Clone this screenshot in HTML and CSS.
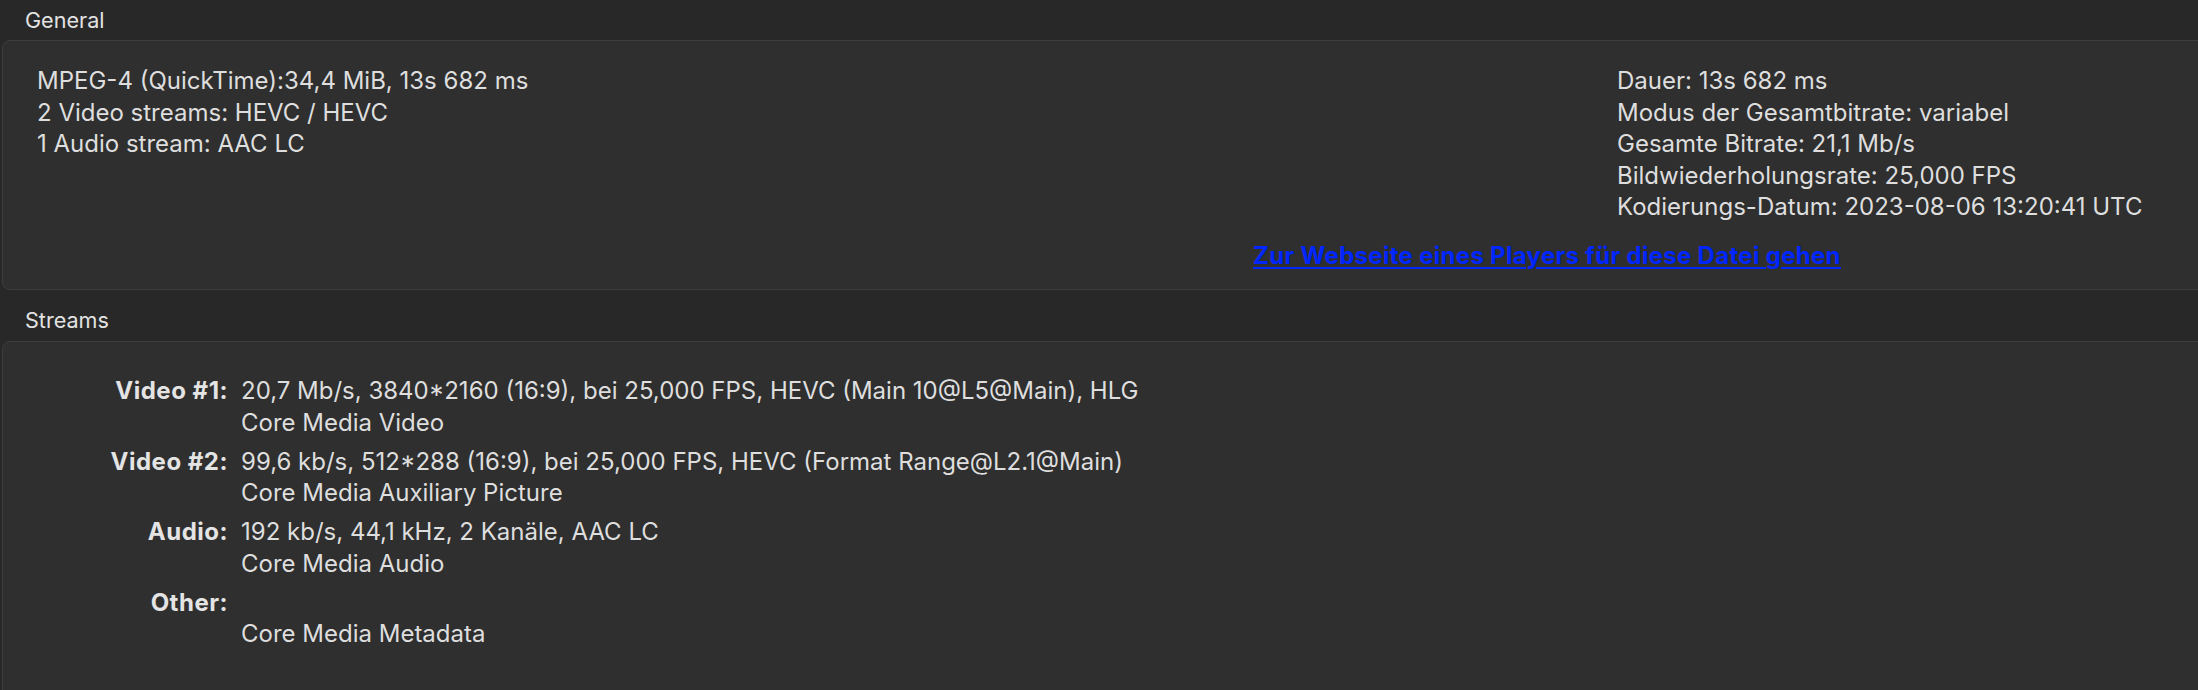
FILE: index.html
```html
<!DOCTYPE html>
<html lang="de">
<head>
<meta charset="utf-8">
<title>MediaInfo</title>
<link rel="stylesheet" href="styles.css">
</head>
<body>
<div class="page">
  <div class="section-title">General</div>
  <div class="box general">
    <div class="general-grid">
      <div class="col">
        <div class="line">MPEG-4 (QuickTime):34,4 MiB, 13s 682 ms</div>
        <div class="line">2 Video streams: HEVC / HEVC</div>
        <div class="line">1 Audio stream: AAC LC</div>
      </div>
      <div class="col">
        <div class="line">Dauer: 13s 682 ms</div>
        <div class="line">Modus der Gesamtbitrate: variabel</div>
        <div class="line">Gesamte Bitrate: 21,1 Mb/s</div>
        <div class="line">Bildwiederholungsrate: 25,000 FPS</div>
        <div class="line">Kodierungs-Datum: 2023-08-06 13:20:41 UTC</div>
      </div>
    </div>
    <div class="link-row"><a class="player-link" href="#">Zur Webseite eines Players für diese Datei gehen</a></div>
  </div>

  <div class="section-title streams-title">Streams</div>
  <div class="box streams">
    <div class="stream-grid">
      <div class="label">Video #1:</div>
      <div class="value"><div class="line">20,7 Mb/s, 3840*2160 (16:9), bei 25,000 FPS, HEVC (Main 10@L5@Main), HLG</div><div class="line">Core Media Video</div></div>
      <div class="label">Video #2:</div>
      <div class="value"><div class="line">99,6 kb/s, 512*288 (16:9), bei 25,000 FPS, HEVC (Format Range@L2.1@Main)</div><div class="line">Core Media Auxiliary Picture</div></div>
      <div class="label">Audio:</div>
      <div class="value"><div class="line">192 kb/s, 44,1 kHz, 2 Kanäle, AAC LC</div><div class="line">Core Media Audio</div></div>
      <div class="label">Other:</div>
      <div class="value"><div class="line">&nbsp;</div><div class="line">Core Media Metadata</div></div>
    </div>
  </div>
</div>
</body>
</html>
```
FILE: styles.css
```css
html, body {
  margin: 0;
  padding: 0;
  background: #282828;
  overflow: hidden;
}
body {
  width: 2198px;
  height: 690px;
  font-family: Inter, "Liberation Sans", sans-serif;
  color: #dedede;
}
.page {
  display: flex;
  flex-direction: column;
}
.section-title {
  height: 40px;
  line-height: 40px;
  padding-left: 25px;
  font-size: 21.6px;
  color: #e2e2e2;
}
.streams-title {
  margin-top: 11px;
  height: 40px;
  line-height: 38px;
}
.box {
  margin-left: 2px;
  width: 2240px;
  background: #2f2f2f;
  border: 1px solid #3d3d3d;
  border-radius: 8px;
  box-sizing: border-box;
}
.general {
  height: 250px;
  padding: 24px 0 0 34px;
}
.general-grid {
  display: grid;
  grid-template-columns: 1580px auto;
}
.line {
  font-size: 24px;
  line-height: 31.5px;
  white-space: nowrap;
}
.link-row {
  display: flex;
  padding-left: 1216px;
  margin-top: 17px;
}
.player-link {
  font-size: 24px;
  line-height: 31.5px;
  font-weight: 700;
  letter-spacing: 0.3px;
  color: #0026ff;
  text-decoration: underline;
  text-decoration-thickness: 2px;
  text-underline-offset: 3px;
}
.streams {
  height: 400px;
  padding-top: 33px;
}
.stream-grid {
  display: grid;
  grid-template-columns: 225px 1fr;
  column-gap: 13px;
  row-gap: 7.5px;
}
.label {
  text-align: right;
  font-weight: 700;
  font-size: 24px;
  letter-spacing: 0.5px;
  line-height: 31.5px;
  color: #e4e4e4;
}
```
